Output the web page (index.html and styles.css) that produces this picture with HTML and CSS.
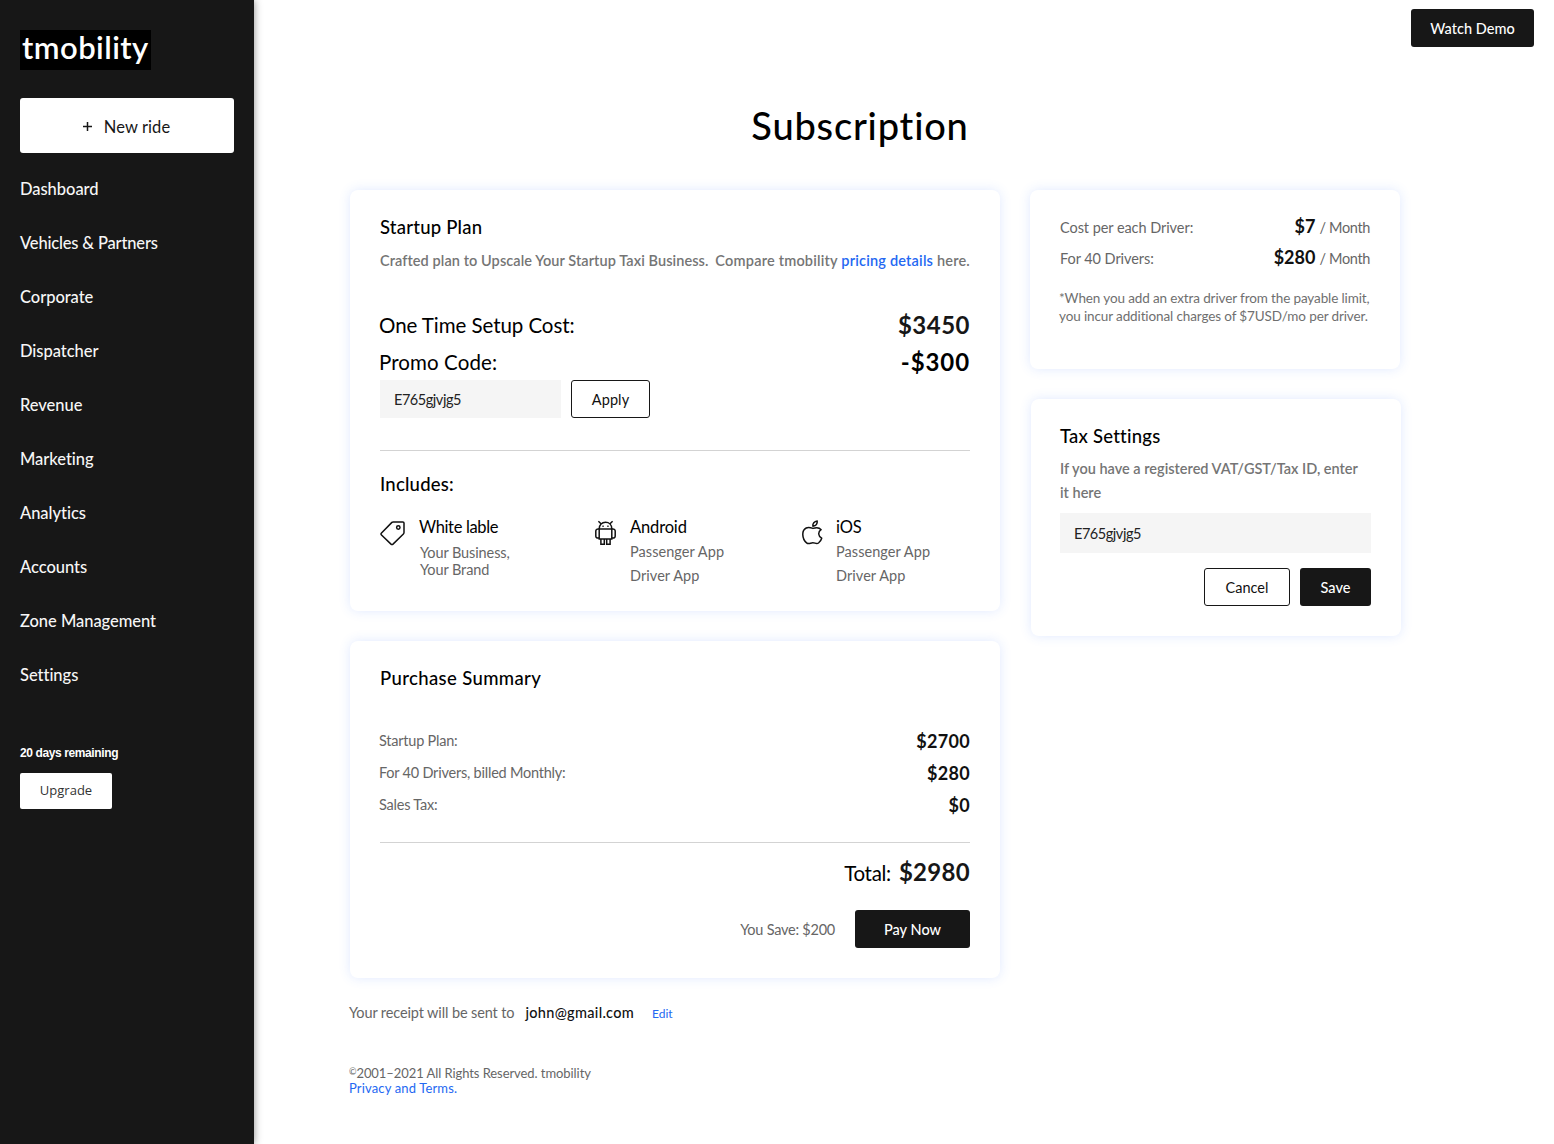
FILE: index.html
```html
<!DOCTYPE html>
<html lang="en">
<head>
<meta charset="utf-8">
<title>Subscription – tmobility</title>
<link rel="stylesheet" href="styles.css">
</head>
<body>
<div class="app">
  <aside class="sidebar">
    <div class="logo">tmobility</div>
    <button class="new-ride"><svg width="9" height="9" viewBox="0 0 9 9"><path d="M4.5 0v9M0 4.5h9" stroke="#171717" stroke-width="1.5"/></svg>New ride</button>
    <nav class="menu">
      <a>Dashboard</a>
      <a class="tight">Vehicles &amp; Partners</a>
      <a>Corporate</a>
      <a>Dispatcher</a>
      <a>Revenue</a>
      <a>Marketing</a>
      <a>Analytics</a>
      <a>Accounts</a>
      <a>Zone Management</a>
      <a>Settings</a>
    </nav>
    <div class="trial">20 days remaining</div>
    <button class="upgrade">Upgrade</button>
  </aside>

  <main class="main">
    <header class="topbar"><button class="btn dark demo">Watch Demo</button></header>
    <div class="content">
      <h1>Subscription</h1>
      <div class="columns">
        <div class="col-left">
          <section class="card plan">
            <h2>Startup Plan</h2>
            <p class="lead"><span>Crafted plan to Upscale Your Startup Taxi Business.</span><span class="compare">Compare tmobility <a>pricing details</a> here.</span></p>
            <div class="cost"><span>One Time Setup Cost:</span><b>$3450</b></div>
            <div class="cost promo"><span>Promo Code:</span><b>-$300</b></div>
            <div class="promo-form"><div class="field">E765gjvjg5</div><button class="btn outline apply">Apply</button></div>
            <hr>
            <h2 class="includes">Includes:</h2>
            <div class="features">
              <div class="feature label">
                <svg width="26" height="26" viewBox="0 0 26 26" fill="none" stroke="#111" stroke-width="1.5" stroke-linejoin="round"><path d="M13.2 1.9h9.6q1.2 0 1.2 1.2v9.5q0 .8-.6 1.4L13 24.1q-1 .9-2 0L1.5 15q-1-1 0-2L11.900 2.400q.5-.5 1.300-.5z"/><circle cx="18.300" cy="7.500" r="1.700"/></svg>
                <div><h3>White lable</h3><p>Your Business,</p><p>Your Brand</p></div>
              </div>
              <div class="feature android">
                <svg width="22" height="26" viewBox="0 0 22 26" fill="none" stroke="#111" stroke-width="1.500"><path d="M4.200 8.900C4.200 4.800 7 2.300 10.500 2.300s6.300 2.500 6.300 6.600M6 3.700 3.400 1.300M15 3.700l2.600-2.400M4.200 8.900h12.600v10.200H4.200zM4.200 9.200C2 8.700.8 9.500.8 11v5.200c0 1.300 1.200 2.300 3.400 1.700M16.800 9.200c2.200-.5 3.400.3 3.400 1.800v5.200c0 1.300-1.200 2.300-3.400 1.700M5.900 19.300v4.900h3.400v-4.900M11.700 19.300v4.900h3.400v-4.900"/><path d="M7.400 6.200h1.300M12.300 6.200h1.300"/></svg>
                <div><h3>Android</h3><p>Passenger App</p><p>Driver App</p></div>
              </div>
              <div class="feature ios">
                <svg width="22" height="26" viewBox="0 0 22 26" fill="none" stroke="#111" stroke-width="1.500" stroke-linejoin="round"><path d="M11 8.400C8.500 7.500 6.500 6.800 4.200 8 1.600 9.300.7 12 .8 14.600c.1 3.200 1.700 6.500 3.800 8.300 2.200 1.800 4-.2 6.200-.2s3.700 1.700 5.700.3c1.600-1.200 2.700-3 3.200-4.800-3.700-1.900-4-6.300-.6-8.500-2.400-3-5.300-2.200-8.100-1.300z"/><path d="M10.900 6.200c-.5-2.700 1.400-4.900 4.300-5.300.3 3-1.400 5-4.300 5.300z"/></svg>
                <div><h3>iOS</h3><p>Passenger App</p><p>Driver App</p></div>
              </div>
            </div>
          </section>

          <section class="card summary">
            <h2 class="wide">Purchase Summary</h2>
            <div class="lines">
              <div><span>Startup Plan:</span><b>$2700</b></div>
              <div><span>For 40 Drivers, billed Monthly:</span><b>$280</b></div>
              <div><span>Sales Tax:</span><b>$0</b></div>
            </div>
            <hr>
            <div class="total"><span>Total:</span><b>$2980</b></div>
            <div class="pay"><span>You Save: $200</span><button class="btn dark pay-now">Pay Now</button></div>
          </section>

          <div class="receipt"><span>Your receipt will be sent to</span><strong>john@gmail.com</strong><a>Edit</a></div>
          <footer><div><span class="copy">©</span>2001–2021 All Rights Reserved. tmobility</div><a>Privacy and Terms.</a></footer>
        </div>

        <div class="col-right">
          <section class="card rates">
            <div class="rate"><span>Cost per each Driver:</span><span class="month"><b>$7</b>/ Month</span></div>
            <div class="rate"><span>For 40 Drivers:</span><span class="month"><b>$280</b>/ Month</span></div>
            <p class="note">*When you add an extra driver from the payable limit,<br>you incur additional charges of $7USD/mo per driver.</p>
          </section>
          <section class="card tax">
            <h2>Tax Settings</h2>
            <p class="lead">If you have a registered VAT/GST/Tax ID, enter<br>it here</p>
            <div class="field">E765gjvjg5</div>
            <div class="actions"><button class="btn outline cancel">Cancel</button><button class="btn dark save">Save</button></div>
          </section>
        </div>
      </div>
    </div>
  </main>
</div>
</body>
</html>
```
FILE: styles.css
```css
* { box-sizing: border-box; }
body { margin: 0; background: #fff; color: #000; font-family: Lato, "Liberation Sans", sans-serif; }
h1, h2, h3, p { margin: 0; font-weight: 500; }
button { font-family: inherit; border: 0; padding: 0; margin: 0; }
a { color: #2468f2; }
svg { display: block; flex: none; }
hr { border: 0; height: 1px; margin: 0; background: #d3d3d3; }

.app { display: flex; width: 1554px; height: 1144px; overflow: hidden; }

/* Sidebar */
.sidebar { width: 254px; flex: none; padding: 30px 20px 0; background: #171717; color: #fff; box-shadow: 0 0 8px rgba(0, 0, 0, .45); }
.logo { width: 131px; height: 40px; padding-left: 2px; background: #000; font-size: 31px; line-height: 35px; font-weight: 600; letter-spacing: .45px; white-space: nowrap; }
.new-ride { display: flex; align-items: center; justify-content: center; gap: 12px; width: 214px; height: 55px; margin-top: 28px; border-radius: 3px; background: #fff; color: #171717; font-size: 16.500px; letter-spacing: .1px; padding: 2px 1px 0 0; }
.menu { display: flex; flex-direction: column; margin-top: 10px; }
.menu a { height: 54px; line-height: 53px; color: #f6f6f6; font-size: 16.500px; font-weight: 500; letter-spacing: -.04px; white-space: nowrap; }
.menu a.tight { letter-spacing: -.17px; }
.trial { margin-top: 42px; height: 17px; font: bold 12px/17px "Liberation Sans", sans-serif; letter-spacing: -.39px; }
.upgrade { width: 92px; height: 36px; margin-top: 11px; padding-bottom: 2px; border-radius: 2px; background: #fff; color: #333; font: 13px "Open Sans", sans-serif; }

/* Page */
.main { flex: 1; min-width: 0; }
.topbar { display: flex; justify-content: flex-end; padding: 9px 20px 0 0; }
.content { padding-left: 96px; }
h1 { width: 1020px; margin-top: 53px; height: 52px; line-height: 50px; text-align: center; font-size: 38px; letter-spacing: .8px; }
.columns { display: flex; gap: 30px; margin-top: 38px; }
.col-left { width: 650px; flex: none; }
.col-right { width: 371px; flex: none; }
.card { padding: 24px 30px 0; border-radius: 8px; background: #fff; box-shadow: 0 0 12px rgba(60, 120, 255, .16); }
h2 { height: 26px; line-height: 26px; font-size: 18.500px; letter-spacing: .22px; }
h2.wide { letter-spacing: .37px; }
.lead { margin-top: 8px; height: 24px; color: #757575; font-size: 14.500px; line-height: 25px; font-weight: 600; letter-spacing: .08px; white-space: nowrap; }

.btn { height: 38px; border-radius: 3px; font-size: 14.500px; letter-spacing: .02px; }
.dark { background: #171717; color: #fff; font-weight: 500; }
.outline { background: #fff; color: #111; border: 1px solid #171717; }
.demo { width: 123px; }
.apply { width: 79px; letter-spacing: .1px; }
.cancel { width: 86px; }
.save { width: 71px; }
.field { height: 38px; padding-left: 14px; background: #f5f5f5; color: #222; font-size: 14.500px; line-height: 39px; letter-spacing: -.46px; }

/* Plan */
.plan { height: 421px; }
.plan .lead { display: flex; justify-content: space-between; }
.compare { letter-spacing: .2px; }
.cost { display: flex; justify-content: space-between; margin: 35px 0 0 -1px; height: 37px; line-height: 37px; font-size: 20.500px; letter-spacing: -.06px; }
.cost b { font-size: 24px; font-weight: 700; letter-spacing: .5px; color: #171717; line-height: 35px; }
.cost.promo { margin-top: 0; height: 36px; letter-spacing: .1px; }
.promo b { color: #000; letter-spacing: .9px; }
.promo-form { display: flex; gap: 10px; }
.promo-form .field { width: 181px; }
.plan hr { margin-top: 32px; }
.includes { margin-top: 20px; }
.features { display: grid; grid-template-columns: 215px 207px 1fr; margin-top: 18px; }
.feature { display: flex; }
.feature svg { margin-top: 5px; }
.feature h3 { height: 25px; line-height: 24px; font-size: 16.500px; font-weight: 400; letter-spacing: -.15px; }
.feature p { line-height: 24px; font-size: 14.500px; font-weight: 400; color: #666; letter-spacing: .06px; }
.label { gap: 13px; }
.label h3 { letter-spacing: -.35px; }
.label p { padding-left: 1px; line-height: 17px; letter-spacing: -.1px; }
.label h3 + p { margin-top: 4px; }
.android { gap: 13px; }
.ios { gap: 12px; }

/* Purchase summary */
.summary { height: 337px; margin-top: 30px; }
.lines { margin: 34px 0 21px -1px; }
.lines div { display: flex; justify-content: space-between; height: 32px; line-height: 32px; color: #666; font-size: 14.500px; letter-spacing: -.22px; }
.lines b { line-height: 32px; color: #111; font-size: 18px; font-weight: 700; letter-spacing: .3px; }
.total { display: flex; justify-content: flex-end; align-items: baseline; gap: 8px; margin-top: 12px; height: 34px; line-height: 34px; font-size: 20.500px; letter-spacing: -.3px; }
.total b { font-size: 24px; color: #171717; letter-spacing: .3px; }
.pay { display: flex; justify-content: flex-end; align-items: center; gap: 20px; margin-top: 21px; color: #666; font-size: 14.500px; letter-spacing: -.24px; }
.pay-now { width: 115px; }

.receipt { display: flex; align-items: baseline; margin: 23px 0 0 -1px; height: 24px; line-height: 24px; font-size: 14.500px; letter-spacing: -.12px; color: #666; }
.receipt strong { margin-left: 11px; color: #111; font-weight: 500; letter-spacing: .3px; }
.receipt a { margin-left: 18px; font-size: 12px; letter-spacing: 0; }
footer { margin: 41px 0 0 -1px; color: #666; font-size: 13px; line-height: 15px; letter-spacing: -.07px; }
footer a { display: block; letter-spacing: .15px; }
.copy { font-size: 9px; vertical-align: 3px; line-height: 1; }

/* Right column */
.rates { width: 370px; height: 179px; padding-top: 22px; }
.rate { display: flex; justify-content: space-between; height: 31px; line-height: 31px; font-size: 14.500px; color: #666; letter-spacing: -.06px; }
.month { line-height: 29px; letter-spacing: -.35px; }
.rate b { margin-right: 4px; color: #111; font-size: 18px; letter-spacing: 0; }
.note { margin: 15px 0 0 -1px; color: #6f6f6f; font-size: 13.500px; line-height: 18px; font-weight: 400; letter-spacing: -.12px; white-space: nowrap; }
.tax { width: 370px; height: 237px; margin: 30px 0 0 1px; padding-left: 29px; }
.tax .lead { height: 48px; line-height: 24px; letter-spacing: 0; }
.tax .field { height: 40px; line-height: 41px; margin-top: 8px; }
.actions { display: flex; justify-content: flex-end; gap: 10px; margin-top: 15px; }
```
